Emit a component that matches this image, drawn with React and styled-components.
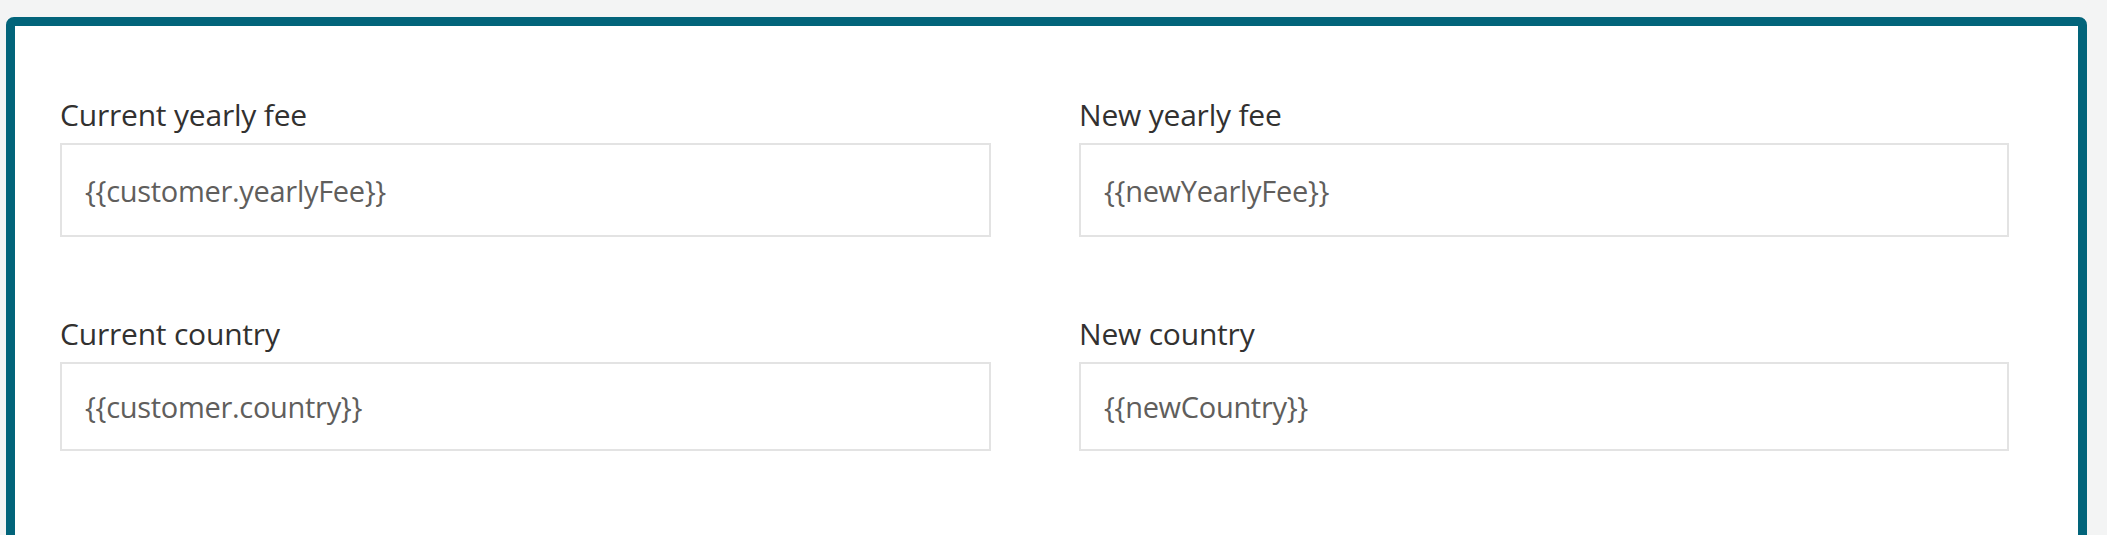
import React from 'react';
import styled, {createGlobalStyle} from 'styled-components';

const GlobalStyle=createGlobalStyle`
body{
    margin:0;
    background:#f3f4f4;
    font-family:"Open Sans","Noto Sans",sans-serif;
}
`;

const fields=[
    [
        {label:"Current yearly fee",value:"{{customer.yearlyFee}}"},
        {label:"New yearly fee",value:"{{newYearlyFee}}"}
    ],
    [
        {label:"Current country",value:"{{customer.country}}"},
        {label:"New country",value:"{{newCountry}}"}
    ]
];

function App() {
  return (
    <>
    <GlobalStyle/>
    <Page>
    <Card>
        {fields.map((row,i)=>(
            <Row key={i}>
            {row.map((f)=>(
                <Field key={f.label}>
                    <Label>{f.label}</Label>
                    <Box $tall={i===0}>{f.value}</Box>
                </Field>
            ))}
            </Row>
        ))}
    </Card>
    </Page>
    </>
  );
}

const Page=styled.div`
padding:17px 20px 0 6px;
height:535px;
overflow:hidden;
box-sizing:border-box;
`;
const Card=styled.div`
background:#ffffff;
border:9px solid #02647a;
border-radius:8px;
min-height:700px;
padding:69px 69px 0 45px;
display:flex;
flex-direction:column;
gap:77px;
`;
const Row=styled.div`
display:grid;
grid-template-columns:931px 930px;
column-gap:88px;
`;
const Field=styled.div`
display:flex;
flex-direction:column;
`;
const Label=styled.div`
font-size:30px;
line-height:40px;
color:#323130;
margin-bottom:8px;
letter-spacing:-0.2px;
`;
const Box=styled.div`
height:${p=>p.$tall ? "94px" : "89px"};
box-sizing:border-box;
border:2px solid #e3e3e3;
padding:0 23px;
display:flex;
align-items:center;
font-size:29px;
color:#605e5c;
letter-spacing:-0.3px;
`;

export default App;
